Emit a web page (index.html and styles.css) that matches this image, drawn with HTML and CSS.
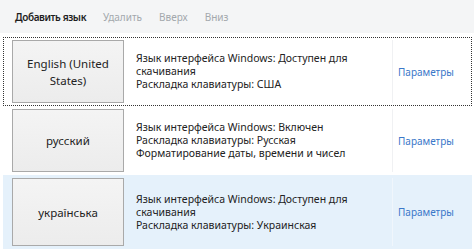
FILE: index.html
```html
<!DOCTYPE html>
<html lang="ru">
<head>
    <meta charset="UTF-8">
    <title>Язык</title>
    <link rel="stylesheet" href="styles.css">
</head>
<body>
    <div class="toolbar">
        <span class="tool active">Добавить язык</span>
        <span class="tool">Удалить</span>
        <span class="tool">Вверх</span>
        <span class="tool">Вниз</span>
    </div>

    <div class="list">
        <div class="row focused">
            <div class="lang-btn">English (United States)</div>
            <div class="desc">
                Язык интерфейса Windows: Доступен для скачивания<br>
                Раскладка клавиатуры: США
            </div>
            <div class="opts"><a href="#">Параметры</a></div>
        </div>

        <div class="row">
            <div class="lang-btn">русский</div>
            <div class="desc">
                Язык интерфейса Windows: Включен<br>
                Раскладка клавиатуры: Русская<br>
                Форматирование даты, времени и чисел
            </div>
            <div class="opts"><a href="#">Параметры</a></div>
        </div>

        <div class="row selected">
            <div class="lang-btn">українська</div>
            <div class="desc">
                Язык интерфейса Windows: Доступен для скачивания<br>
                Раскладка клавиатуры: Украинская
            </div>
            <div class="opts"><a href="#">Параметры</a></div>
        </div>
    </div>
</body>
</html>
```

FILE: styles.css
```css
body {
    margin: 0;
    background: #fff;
    font-family: "Noto Sans", "Open Sans", sans-serif;
    color: #1e1e1e;
}

.toolbar {
    height: 33px;
    background: #f4f5f6;
    display: flex;
    align-items: center;
    gap: 17px;
    padding-left: 15px;
    font-size: 10px;
}

.tool {
    color: #a3a8ad;
}

.tool.active {
    color: #1e1e1e;
    font-weight: 600;
    letter-spacing: -0.4px;
}

.list {
    padding: 4px 2px 0 3px;
}

.row {
    display: flex;
    height: 69px;
    box-sizing: border-box;
    padding: 3px 0 3px 9px;
}

.row.focused {
    outline: 1px dotted #333;
    outline-offset: -1px;
}

.row.selected {
    background: #e5f1fb;
    height: 74px;
}

.lang-btn {
    width: 112px;
    height: 63px;
    box-sizing: border-box;
    border: 1px solid #a9a9a9;
    background: linear-gradient(#f4f4f4, #ececec);
    display: flex;
    align-items: center;
    justify-content: center;
    text-align: center;
    padding: 0 8px;
    font-size: 11.5px;
    line-height: 17px;
    color: #222;
}

.selected .lang-btn {
    height: 68px;
}

.desc {
    width: 256px;
    margin-left: 12px;
    display: flex;
    align-items: center;
    font-size: 10.5px;
    line-height: 13px;
    color: #222;
}

.opts {
    flex: 1;
    border-left: 1px solid #f0f1f3;
    display: flex;
    align-items: center;
    padding-left: 5px;
    font-size: 10px;
}

.selected .opts {
    border-left-color: #f0f6fc;
}

.opts a {
    color: #3b78c9;
    text-decoration: none;
}
```
